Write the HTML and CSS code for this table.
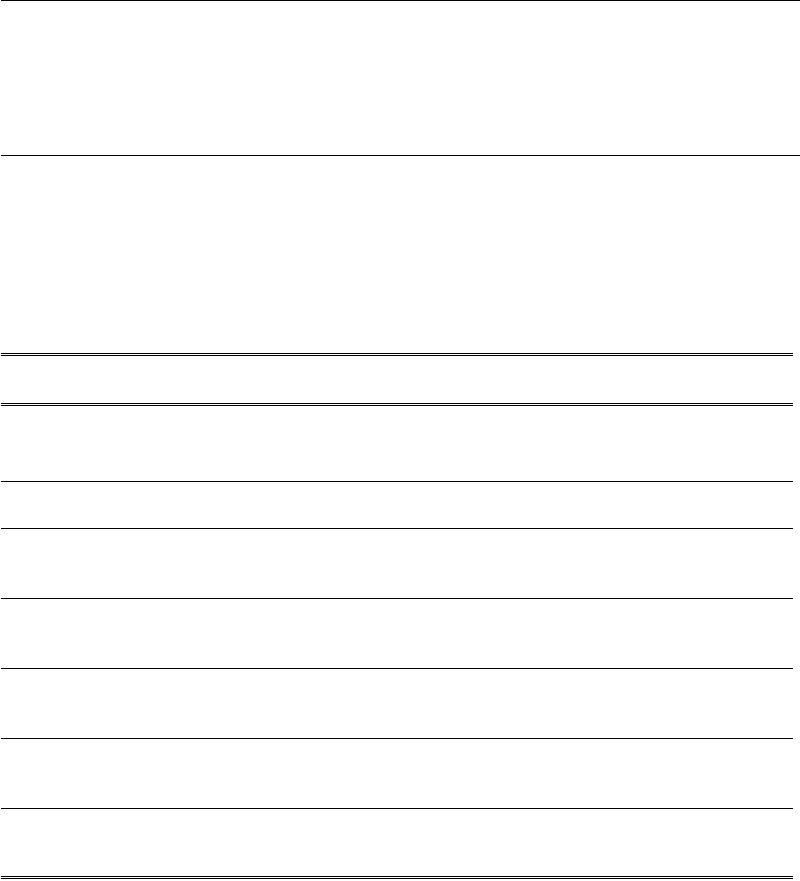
FILE: index.html
```html
<!DOCTYPE html>
<html lang="en">
<head>
<meta charset="utf-8">
<title>Sheet</title>
<link rel="stylesheet" href="styles.css">
</head>
<body>
<div class="page">
  <header class="masthead"></header>
  <section class="sheet">
    <div class="head-row"></div>
    <div class="body">
      <div class="row tall"></div>
      <div class="row short"></div>
      <div class="row"></div>
      <div class="row"></div>
      <div class="row"></div>
      <div class="row"></div>
      <div class="row last"></div>
    </div>
  </section>
</div>
</body>
</html>
```
FILE: styles.css
```css
html, body {
  margin: 0;
  padding: 0;
  background: #fff;
  font-family: "Liberation Serif", serif;
}
.page {
  padding-left: 1px;
  display: flex;
  flex-direction: column;
}
.masthead {
  height: 154px;
  border-top: 1px solid #000;
  border-bottom: 1px solid #000;
  margin-bottom: 197px;
}
.sheet {
  width: 792px;
  border-top: 3px double #000;
  border-bottom: 3px double #000;
}
.head-row {
  height: 47px;
  border-bottom: 3px double #000;
}
.body {
  display: flex;
  flex-direction: column;
}
.row {
  height: 69px;
  border-bottom: 1px solid #000;
}
.row.tall {
  height: 75px;
}
.row.short {
  height: 46px;
}
.row.last {
  height: 67px;
  border-bottom: none;
}
```
